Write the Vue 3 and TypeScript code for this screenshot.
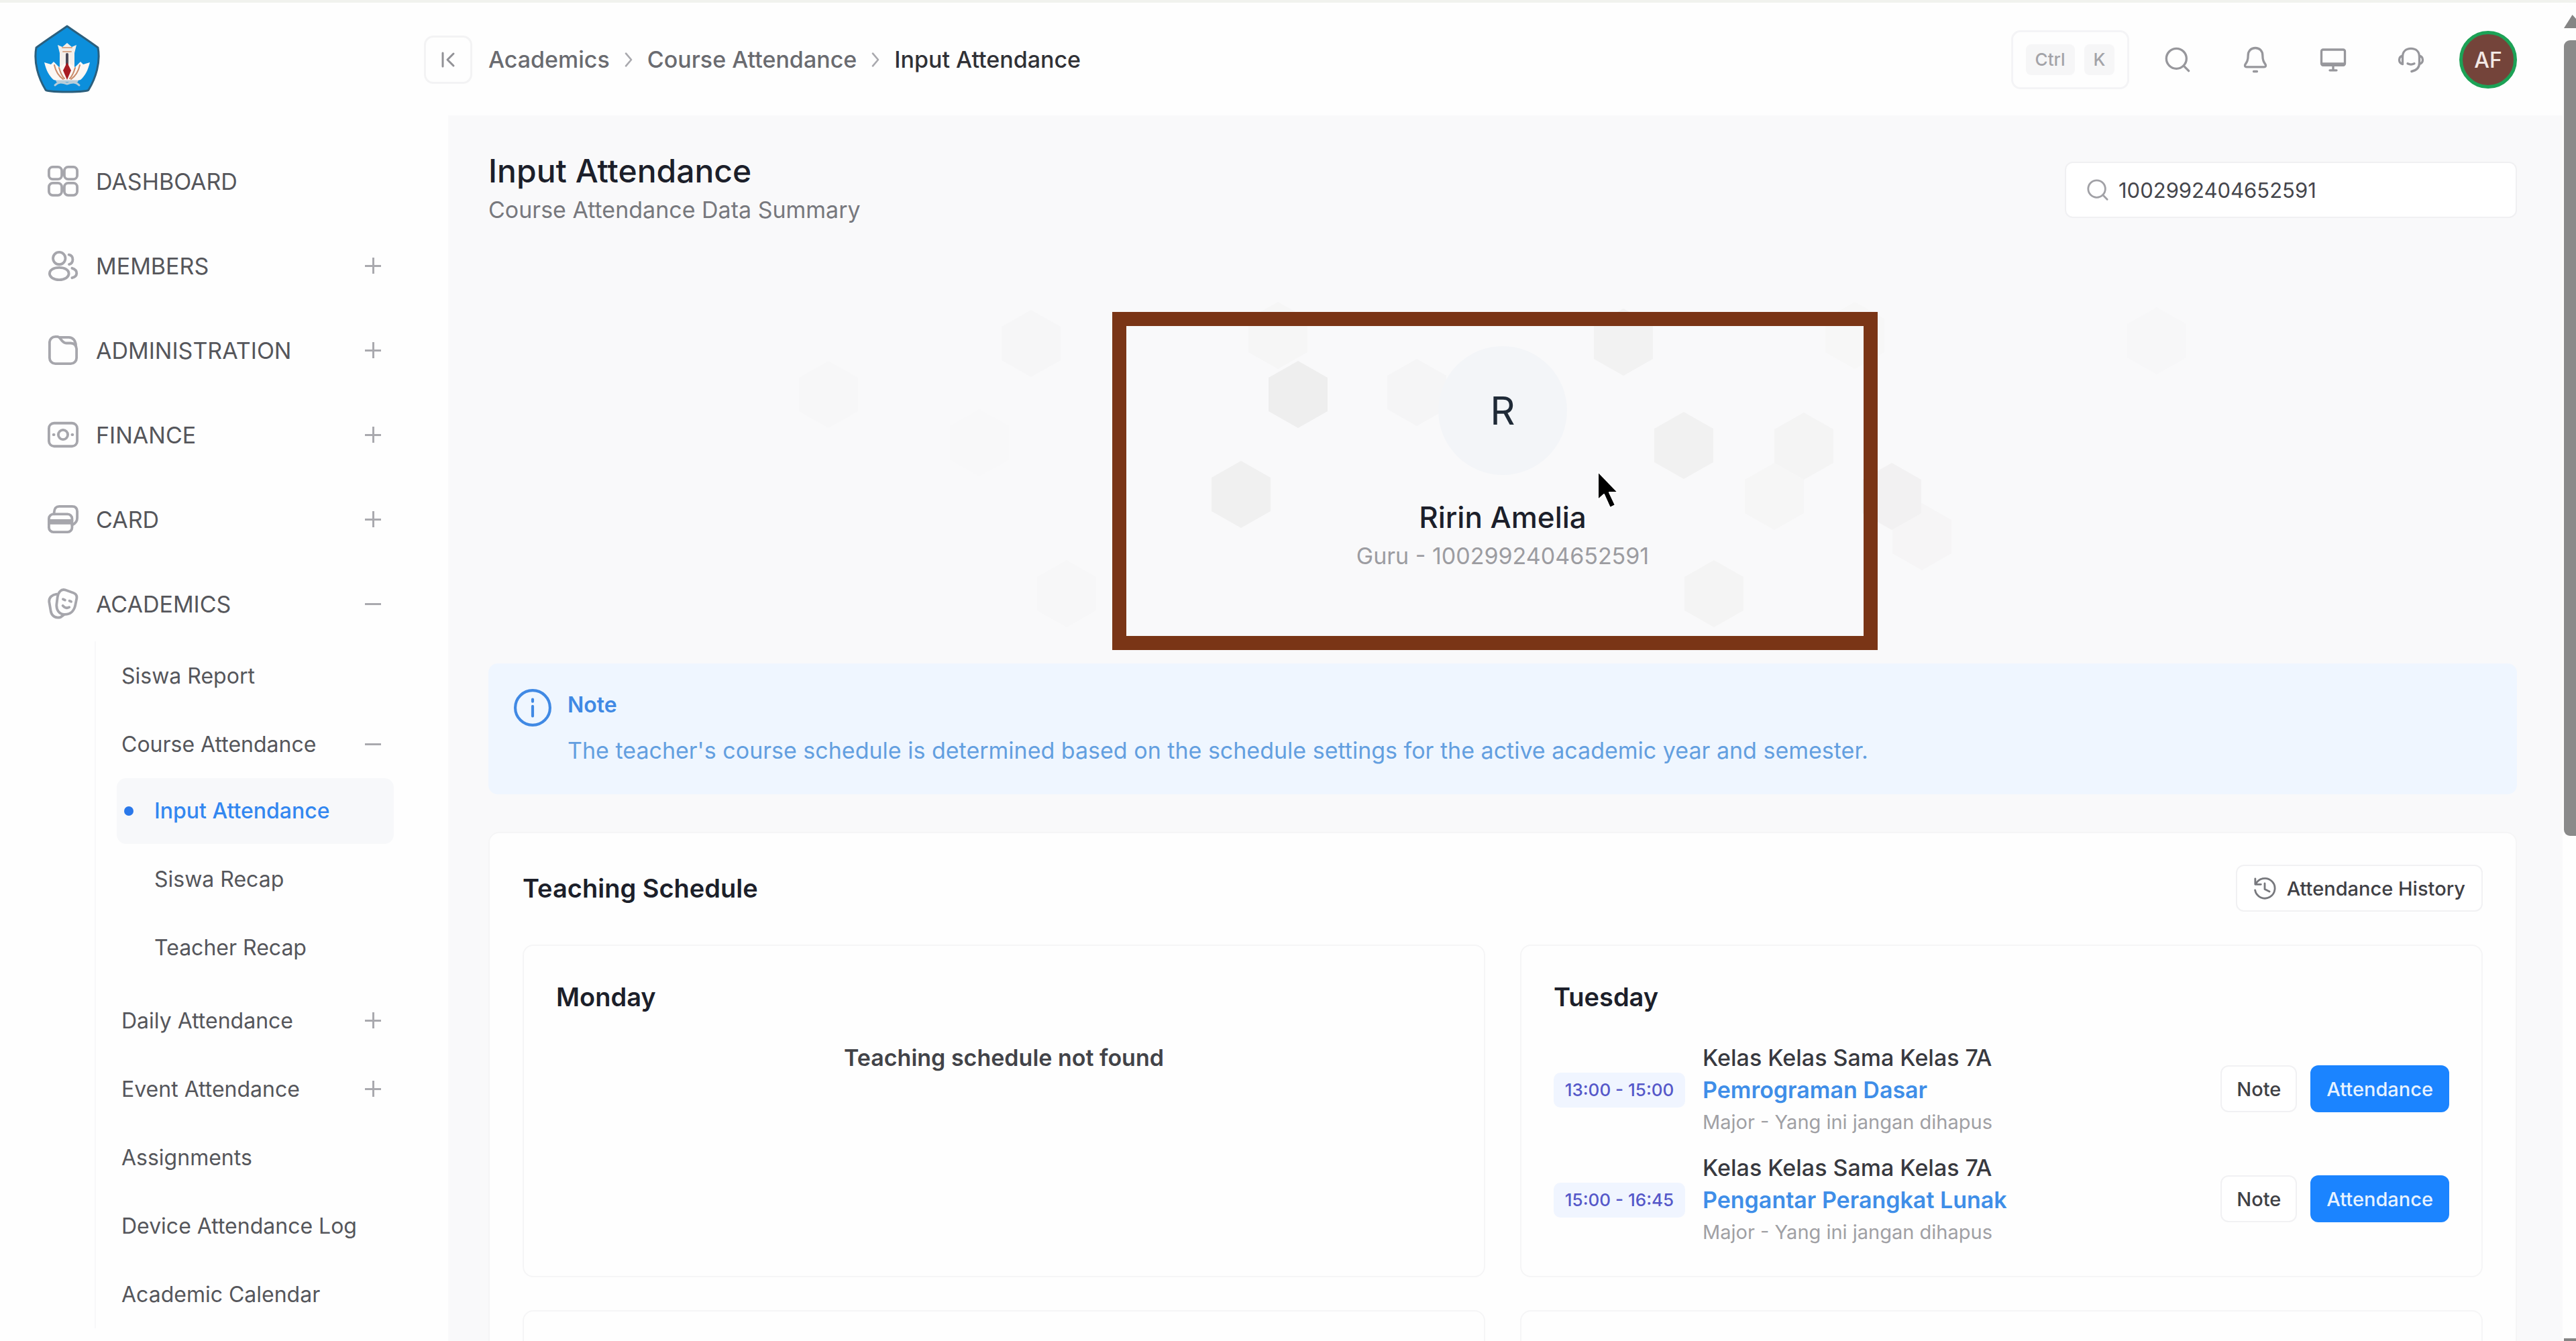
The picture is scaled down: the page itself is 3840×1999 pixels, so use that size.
<script setup lang="ts">
interface MenuItem {
  label: string
  icon: string
  mark?: 'plus' | 'minus'
}

interface SubItem {
  label: string
  mark?: 'plus' | 'minus'
  children?: { label: string; active?: boolean }[]
}

interface Lesson {
  time: string
  room: string
  course: string
  major: string
}

interface Day {
  name: string
  lessons: Lesson[]
}

const icons: Record<string, string[]> = {
  dashboard: [
    'M5 1h3a3 3 0 0 1 3 3v3.500a3 3 0 0 1-3 3H4a3 3 0 0 1-3-3V4a3 3 0 0 1 3-3z',
    'M16 1h4a3 3 0 0 1 3 3v3.500a3 3 0 0 1-3 3h-4a3 3 0 0 1-3-3V4a3 3 0 0 1 3-3z',
    'M4 13.500h4a3 3 0 0 1 3 3V20a3 3 0 0 1-3 3H4a3 3 0 0 1-3-3v-3.500a3 3 0 0 1 3-3z',
    'M16 13.500h4a3 3 0 0 1 3 3V20a3 3 0 0 1-3 3h-4a3 3 0 0 1-3-3v-3.500a3 3 0 0 1 3-3z',
  ],
  members: [
    'M9 1.500a4.800 4.800 0 1 1 0 9.600 4.800 4.800 0 0 1 0-9.600z',
    'M9 13.500c4.500 0 7.500 1.900 7.500 4.600S13.500 23 9 23s-7.500-2.200-7.500-4.900S4.500 13.500 9 13.500z',
    'M16.500 3.500c4 .8 4 6.400.2 7.500',
    'M19 14c5 1.600 4.500 6.400 0 7.500',
  ],
  administration: [
    'M1.500 6a4.500 4.500 0 0 1 4.500-4.500h1.500c3 0 3 5 7 5h3.500A4.500 4.500 0 0 1 22.500 11v7a4.500 4.500 0 0 1-4.500 4.500H6A4.500 4.500 0 0 1 1.500 18z',
    'M9 2h7.500c3 0 5.500 2.500 5.500 7',
  ],
  finance: [
    'M5 3h14a4 4 0 0 1 4 4v10a4 4 0 0 1-4 4H5a4 4 0 0 1-4-4V7a4 4 0 0 1 4-4z',
    'M12 8.300a3.700 3.700 0 1 1 0 7.400 3.700 3.700 0 0 1 0-7.400z',
    'M4.500 12h.5M19 12h.5',
  ],
  card: [
    'M4.500 8h11a3.500 3.500 0 0 1 3.500 3.500v7a3.500 3.500 0 0 1-3.500 3.500h-11A3.500 3.500 0 0 1 1 18.500v-7A3.500 3.500 0 0 1 4.500 8z',
    'M1 13h18M1 15h18M5 8c0-4 1-6 4-6h10c3 0 4 1.500 4 4v5c0 3-1.500 4.500-4 5.500',
  ],
  academics: [
    'M13.500 1.200l6.500 2.300c2.200.8 3 2.500 2.500 4.800l-1 5c-1 4.500-4 7.200-8.500 7-4-.2-6.500-3.500-6-8l.7-5.500c.4-3.500 2.800-6.500 5.800-5.600z',
    'M7 4.500C3.500 5 1 7 1.200 10.500L2.500 18c.8 3.800 4 5.500 7.500 4.500l3-2.200',
    'M12 8.500l1.500.6M17 9.800l1.300.5M11.800 13.500c1.500 1.800 3.200 2.200 5 1.200',
  ],
}

const menu: MenuItem[] = [
  { label: 'DASHBOARD', icon: 'dashboard' },
  { label: 'MEMBERS', icon: 'members', mark: 'plus' },
  { label: 'ADMINISTRATION', icon: 'administration', mark: 'plus' },
  { label: 'FINANCE', icon: 'finance', mark: 'plus' },
  { label: 'CARD', icon: 'card', mark: 'plus' },
  { label: 'ACADEMICS', icon: 'academics', mark: 'minus' },
]

const academics: SubItem[] = [
  { label: 'Siswa Report' },
  {
    label: 'Course Attendance',
    mark: 'minus',
    children: [{ label: 'Input Attendance', active: true }, { label: 'Siswa Recap' }, { label: 'Teacher Recap' }],
  },
  { label: 'Daily Attendance', mark: 'plus' },
  { label: 'Event Attendance', mark: 'plus' },
  { label: 'Assignments' },
  { label: 'Device Attendance Log' },
  { label: 'Academic Calendar' },
]

const days: Day[] = [
  { name: 'Monday', lessons: [] },
  {
    name: 'Tuesday',
    lessons: [
      { time: '13:00 - 15:00', room: 'Kelas Kelas Sama Kelas 7A', course: 'Pemrograman Dasar', major: 'Major - Yang ini jangan dihapus' },
      { time: '15:00 - 16:45', room: 'Kelas Kelas Sama Kelas 7A', course: 'Pengantar Perangkat Lunak', major: 'Major - Yang ini jangan dihapus' },
    ],
  },
]

// Background hexagons: centre x, centre y, fill
const hexagons: [number, number, string][] = [
  [507, 249, '#f7f7f8'],
  [809, 173, '#f6f6f7'],
  [732, 321, '#f8f8f9'],
  [862, 546, '#f7f7f8'],
  [1177, 161, '#f6f6f6'],
  [1207, 249, '#eeeeee'],
  [1122, 398, '#f0f0f0'],
  [1384, 246, '#f5f5f6'],
  [1692, 171, '#f2f2f2'],
  [1782, 325, '#f1f1f1'],
  [1961, 326, '#f4f4f4'],
  [1917, 401, '#f6f6f6'],
  [2037, 161, '#f7f7f7'],
  [2137, 461, '#f6f5f6'],
  [2092, 401, '#f2f1f2'],
  [1827, 546, '#f4f4f4'],
  [2487, 169, '#f7f7f8'],
]

const hexPoints = (x: number, y: number): string =>
  [[0, -50], [44, -25], [44, 25], [0, 50], [-44, 25], [-44, -25]].map(([dx, dy]) => `${x + dx},${y + dy}`).join(' ')
</script>

<template>
  <div class="shell">
    <header class="topbar">
      <a class="brand" href="#" aria-label="Home">
        <svg viewBox="0 0 100 104" aria-hidden="true">
          <path d="M50 2C64 12 80 22 96 34c4 22-3 45-14 63-2 4-62 4-64 0C7 79 0 56 4 34 20 22 36 12 50 2z" fill="#0c8fdc" stroke="#2b5f7d" stroke-width="3" stroke-linejoin="round" />
          <path d="M36 30l7 3 7-6 7 6 7-3-3 12v20H39V42z" fill="#f4efea" />
          <path d="M43 34h14M44 40h12" stroke="#d9a98a" stroke-width="2" />
          <path d="M16 56l10 3 4-4 8 8 12-8 12 8 8-8 4 4 10-3c-3 12-7 20-14 26-13 4-27 4-40 0-7-6-11-14-14-26z" fill="#fbf7f4" />
          <path d="M31 60c2 9 6 16 13 21M69 60c-2 9-6 16-13 21M38 64c2 7 4 12 8 16M62 64c-2 7-4 12-8 16" fill="none" stroke="#c98a68" stroke-width="2" />
          <path d="M50 44v24" stroke="#4a4a58" stroke-width="4" />
          <path d="M50 56l6 12-6 14-6-14z" fill="#a81c22" />
          <path d="M32 90c5-5 10-5 18-2 8-3 13-3 18 2M35 84h30" fill="none" stroke="#b9cdd9" stroke-width="3" />
        </svg>
      </a>
      <button class="collapse" type="button" aria-label="Collapse menu">
        <svg viewBox="0 0 24 24" aria-hidden="true"><path d="M4 2v20M20 3l-9 9 9 9" /></svg>
      </button>
      <nav class="crumbs" aria-label="Breadcrumb">
        <a href="#">Academics</a>
        <svg viewBox="0 0 12 24" aria-hidden="true"><path d="M3 5l6 7-6 7" /></svg>
        <a href="#">Course Attendance</a>
        <svg viewBox="0 0 12 24" aria-hidden="true"><path d="M3 5l6 7-6 7" /></svg>
        <span class="current">Input Attendance</span>
      </nav>
      <div class="tools">
        <button class="shortcut" type="button"><kbd>Ctrl</kbd><kbd>K</kbd></button>
        <button class="tool" type="button" aria-label="Search">
          <svg viewBox="0 0 24 24" aria-hidden="true"><circle cx="11" cy="11" r="9" /><path d="M17.500 17.500 22 22" /></svg>
        </button>
        <button class="tool" type="button" aria-label="Notifications">
          <svg viewBox="0 0 24 24" aria-hidden="true"><path d="M12 1.500c4 0 6.500 2.800 6.500 6.700 0 4.300 1 5.800 2.500 8 .8 1.200.2 2.300-1.200 2.300H4.200c-1.400 0-2-1.100-1.200-2.300 1.500-2.200 2.500-3.700 2.500-8 0-3.900 2.500-6.700 6.500-6.700zM10.500 22.500h3" /></svg>
        </button>
        <button class="tool" type="button" aria-label="Display">
          <svg viewBox="0 0 24 24" aria-hidden="true"><path d="M3 3h18a1.500 1.500 0 0 1 1.500 1.500v11A1.500 1.500 0 0 1 21 17H3a1.500 1.500 0 0 1-1.500-1.500v-11A1.500 1.500 0 0 1 3 3zM2 15.500h20M12 17v4M9 21.500h6" /></svg>
        </button>
        <button class="tool" type="button" aria-label="Support">
          <svg viewBox="0 0 24 24" aria-hidden="true"><path d="M4.500 16V9.500c0-4.800 3-7.500 7.500-7.500s7.500 2.700 7.500 7.500V15c0 4-2.500 6.500-7 7.500M4.500 8.500c-2 .5-3 1.800-3 3.700s1 3.300 3 3.800M19.500 8.500c2 .5 3 1.800 3 3.700s-1 3.300-3 3.800M9 15.500c2 1 4 1 6 0" /></svg>
        </button>
        <button class="avatar" type="button">AF</button>
      </div>
    </header>

    <div class="body">
      <nav class="sidebar" aria-label="Main menu">
        <ul class="menu">
          <li v-for="item in menu" :key="item.label">
            <a class="menu-link" href="#">
              <svg class="menu-icon" viewBox="0 0 24 24" aria-hidden="true">
                <path v-for="d in icons[item.icon]" :key="d" :d="d" />
              </svg>
              <span>{{ item.label }}</span>
              <i v-if="item.mark" :class="['mark', item.mark]"></i>
            </a>
          </li>
        </ul>
        <ul class="sub">
          <li v-for="item in academics" :key="item.label">
            <a class="sub-link" href="#">
              <span>{{ item.label }}</span>
              <i v-if="item.mark" :class="['mark', item.mark]"></i>
            </a>
            <ul v-if="item.children" class="nested">
              <li v-for="child in item.children" :key="child.label">
                <a :class="['nested-link', { active: child.active }]" href="#">{{ child.label }}</a>
              </li>
            </ul>
          </li>
        </ul>
      </nav>

      <main class="content">
        <div class="heading">
          <div>
            <h1>Input Attendance</h1>
            <p>Course Attendance Data Summary</p>
          </div>
          <label class="search">
            <svg viewBox="0 0 24 24" aria-hidden="true"><circle cx="11" cy="11" r="9" /><path d="M17.500 17.500 22 22" /></svg>
            <input type="text" value="1002992404652591" aria-label="Search teacher" />
          </label>
        </div>

        <section class="profile">
          <svg class="pattern" viewBox="0 0 3024 650" preserveAspectRatio="xMidYMid slice" aria-hidden="true">
            <polygon v-for="([x, y, fill], i) in hexagons" :key="i" :points="hexPoints(x, y)" :fill="fill" />
          </svg>
          <div class="initial">R</div>
          <h2>Ririn Amelia</h2>
          <p>Guru - 1002992404652591</p>
          <div class="frame"></div>
          <svg class="cursor" viewBox="0 0 34 58" aria-hidden="true">
            <path d="M2 2v42l9-8 9 20 8-4-9-19h13z" fill="#000" stroke="#fff" stroke-width="2" stroke-linejoin="round" />
          </svg>
        </section>

        <section class="note">
          <svg viewBox="0 0 54 54" aria-hidden="true"><circle cx="27" cy="27" r="25" /><path d="M27 25v14M27 15v3" /></svg>
          <div>
            <h3>Note</h3>
            <p>The teacher's course schedule is determined based on the schedule settings for the active academic year and semester.</p>
          </div>
        </section>

        <section class="schedule">
          <div class="schedule-head">
            <h2>Teaching Schedule</h2>
            <button class="outline history" type="button">
              <svg viewBox="0 0 24 24" aria-hidden="true"><path d="M2 2v6h6M2.500 8A10.500 10.500 0 1 1 1.800 14M12 7v6l5 2.500" /></svg>
              Attendance History
            </button>
          </div>
          <div class="days">
            <article v-for="day in days" :key="day.name" class="day">
              <h3>{{ day.name }}</h3>
              <p v-if="!day.lessons.length" class="empty">Teaching schedule not found</p>
              <div v-for="lesson in day.lessons" :key="lesson.time" class="lesson">
                <span class="time">{{ lesson.time }}</span>
                <div class="info">
                  <p class="room">{{ lesson.room }}</p>
                  <p class="course">{{ lesson.course }}</p>
                  <p class="major">{{ lesson.major }}</p>
                </div>
                <div class="actions">
                  <button class="outline" type="button">Note</button>
                  <button class="primary" type="button">Attendance</button>
                </div>
              </div>
            </article>
            <article class="day"></article>
            <article class="day"></article>
          </div>
        </section>
      </main>
    </div>

    <div class="scrollbar" aria-hidden="true">
      <i class="arrow up"></i>
      <i class="thumb"></i>
      <i class="arrow down"></i>
    </div>
  </div>
</template>

<style>
body {
  margin: 0;
}
</style>

<style scoped>
* {
  box-sizing: border-box;
}

h1,
h2,
h3,
p,
ul {
  margin: 0;
  padding: 0;
}

ul {
  list-style: none;
}

a {
  color: inherit;
  text-decoration: none;
}

button,
input,
kbd {
  font: inherit;
}

svg {
  flex: none;
  fill: none;
  stroke-linecap: round;
  stroke-linejoin: round;
}

.shell {
  display: grid;
  grid-template: 172px minmax(0, 1fr) / minmax(0, 1fr) 20px;
  height: 100vh;
  overflow: hidden;
  background: #fefefe;
  color: #1c1f2a;
  font-family: Inter, 'Liberation Sans', sans-serif;
  font-size: 32px;
}

.topbar {
  display: flex;
  align-items: center;
  padding: 2px 68px 0 50px;
  border-top: 4px solid #f1f2ee;
}

.brand {
  width: 582px;
}

.brand svg {
  display: block;
  width: 100px;
  height: 104px;
}

.collapse {
  display: grid;
  place-items: center;
  width: 72px;
  height: 72px;
  padding: 0;
  border: 3px solid #f3f3f4;
  border-radius: 14px;
  background: #fefefe;
}

.collapse svg {
  width: 24px;
  height: 24px;
  stroke: #919196;
  stroke-width: 3;
}

.crumbs {
  display: flex;
  align-items: center;
  gap: 20px;
  margin-left: 24px;
  color: #6a6b70;
  font-size: 34px;
  font-weight: 500;
  line-height: 40px;
}

.crumbs svg {
  width: 16px;
  height: 32px;
  stroke: #a9a9ae;
  stroke-width: 2;
}

.current {
  color: #303136;
}

.tools {
  display: flex;
  align-items: center;
  gap: 76px;
  margin-left: auto;
}

.shortcut {
  display: flex;
  align-items: center;
  justify-content: center;
  gap: 14px;
  width: 176px;
  height: 88px;
  margin-right: -24px;
  padding: 0;
  border: 3px solid #f4f4f6;
  border-radius: 14px;
  background: #fefefe;
}

kbd {
  padding: 0 14px;
  border-radius: 8px;
  background: #f6f6f7;
  color: #a3a3a8;
  font-size: 26px;
  font-weight: 500;
  line-height: 46px;
}

.tool {
  width: 40px;
  height: 40px;
  padding: 0;
  border: 0;
  background: none;
}

.tool svg {
  display: block;
  width: 40px;
  height: 40px;
  stroke: #97979c;
  stroke-width: 2;
}

.avatar {
  width: 86px;
  height: 86px;
  margin-left: -24px;
  padding: 0;
  border: 5px solid #1ca256;
  border-radius: 50%;
  background: #74443a;
  color: #f3e8e4;
  font-weight: 500;
}

.body {
  display: grid;
  grid-template-columns: 668px minmax(0, 1fr);
  grid-row: 2;
  min-height: 0;
}

.sidebar {
  padding: 44px 81px 0 0;
  overflow: hidden;
  color: #55565b;
}

.menu {
  display: grid;
  gap: 18px;
}

.menu-link {
  display: flex;
  align-items: center;
  gap: 26px;
  height: 108px;
  padding: 0 19px 0 71px;
  font-size: 34px;
}

.menu-icon {
  width: 46px;
  height: 46px;
  stroke: #a6a6ac;
  stroke-width: 2;
}

.mark {
  width: 24px;
  height: 24px;
  margin-left: auto;
  background: linear-gradient(#a9a9ae, #a9a9ae) center / 24px 3px no-repeat;
}

.mark.plus {
  background:
    linear-gradient(#a9a9ae, #a9a9ae) center / 24px 3px no-repeat,
    linear-gradient(#a9a9ae, #a9a9ae) center / 3px 24px no-repeat;
}

.sub {
  margin: 2px 0 0 141px;
  border-left: 2px solid #f8f8f9;
}

.sub-link {
  display: flex;
  align-items: center;
  height: 102px;
  padding: 0 19px 0 38px;
}

.nested {
  margin: 0 0 8px 31px;
}

.nested-link {
  position: relative;
  display: block;
  height: 98px;
  margin-bottom: 4px;
  padding-left: 56px;
  border-radius: 14px;
  line-height: 98px;
}

.nested-link.active {
  background: #f7f8fa;
  color: #3387f0;
  font-weight: 500;
}

.nested-link.active::before {
  position: absolute;
  top: 42px;
  left: 11px;
  width: 14px;
  height: 14px;
  border-radius: 50%;
  background: #2a78ea;
  content: '';
}

.content {
  padding: 55px 68px 0 60px;
  overflow: hidden;
  background: #f9f9fa;
}

.heading {
  display: flex;
  align-items: center;
  justify-content: space-between;
  height: 112px;
}

h1 {
  font-size: 48px;
  font-weight: 500;
  line-height: 60px;
}

.heading p {
  color: #77787d;
  font-size: 34px;
  line-height: 56px;
}

.search {
  display: flex;
  align-items: center;
  gap: 14px;
  width: 674px;
  height: 84px;
  padding: 0 30px;
  border: 2px solid #f0f0f2;
  border-radius: 12px;
  background: #fff;
}

.search svg {
  width: 34px;
  height: 34px;
  stroke: #a1a1a6;
  stroke-width: 2;
}

.search input {
  flex: 1;
  min-width: 0;
  padding: 0;
  border: 0;
  outline: 0;
  background: none;
  color: #45464c;
  font-size: 31px;
}

.profile {
  position: relative;
  display: flex;
  flex-direction: column;
  align-items: center;
  height: 650px;
  padding-top: 177px;
}

.pattern {
  position: absolute;
  inset: 0;
  width: 100%;
  height: 100%;
}

.initial {
  position: relative;
  width: 192px;
  height: 192px;
  border-radius: 50%;
  background: #f3f5f8;
  color: #1f2a37;
  font-size: 58px;
  line-height: 192px;
  text-align: center;
}

.profile h2 {
  position: relative;
  margin-top: 35px;
  font-size: 44px;
  font-weight: 500;
  line-height: 56px;
}

.profile p {
  position: relative;
  margin-top: 6px;
  color: #9c9ca1;
  font-size: 34px;
  line-height: 48px;
}

.frame {
  position: absolute;
  top: 126px;
  left: calc(50% - 582px);
  width: 1141px;
  height: 504px;
  border: 21px solid #7a3516;
}

.cursor {
  position: absolute;
  top: 362px;
  left: calc(50% + 140px);
  width: 34px;
  height: 58px;
}

.note {
  display: flex;
  gap: 24px;
  height: 195px;
  padding: 38px 38px 0;
  border-radius: 14px;
  background: #eff6ff;
}

.note svg {
  width: 56px;
  height: 56px;
  stroke: #4089e4;
  stroke-width: 4;
}

.note h3 {
  color: #4089e4;
  font-size: 32px;
  font-weight: 600;
  line-height: 48px;
}

.note p {
  margin-top: 20px;
  color: #639fe0;
  font-size: 34px;
  line-height: 48px;
}

.schedule {
  margin-top: 56px;
  padding: 47px 49px 49px;
  border: 2px solid #f5f5f6;
  border-radius: 16px;
  background: #fefefe;
}

.schedule-head {
  display: flex;
  align-items: center;
  justify-content: space-between;
  margin-bottom: 49px;
}

.schedule h2 {
  font-size: 38px;
  font-weight: 600;
  line-height: 52px;
}

.outline,
.primary {
  height: 70px;
  padding: 0 22px;
  border: 2px solid #f1f1f3;
  border-radius: 12px;
  background: #fff;
  color: #3f4045;
  font-size: 29px;
  font-weight: 500;
}

.primary {
  border-color: #1b84ff;
  background: #1b84ff;
  color: #e6f2ff;
}

.history {
  display: flex;
  align-items: center;
  gap: 16px;
  padding: 0 24px;
}

.history svg {
  width: 34px;
  height: 34px;
  stroke: #77787d;
  stroke-width: 2;
}

.days {
  display: grid;
  grid-template-columns: 1fr 1fr;
  gap: 49px 52px;
}

.day {
  min-height: 496px;
  padding: 52px 48px 41px;
  border: 2px solid #f5f5f6;
  border-radius: 16px;
}

.day h3 {
  margin-bottom: 43px;
  font-size: 38px;
  font-weight: 600;
  line-height: 48px;
}

.empty {
  color: #424348;
  font-size: 34px;
  font-weight: 600;
  line-height: 48px;
  text-align: center;
}

.lesson {
  display: flex;
  align-items: center;
}

.lesson + .lesson {
  margin-top: 20px;
}

.time {
  width: 196px;
  border-radius: 10px;
  background: #f0f5ff;
  color: #5558c9;
  font-size: 26px;
  font-weight: 500;
  line-height: 52px;
  text-align: center;
}

.info {
  flex: 1;
  margin-left: 26px;
  font-size: 34px;
  line-height: 48px;
}

.room {
  color: #38393f;
  font-weight: 500;
}

.course {
  color: #3f8ee8;
  font-weight: 600;
}

.major {
  color: #a0a0a4;
  font-size: 29px;
}

.actions {
  display: flex;
  gap: 20px;
  padding-bottom: 4px;
}

.scrollbar {
  display: flex;
  grid-row: 1 / 3;
  grid-column: 2;
  flex-direction: column;
  align-items: flex-end;
  padding-top: 18px;
  border-top: 4px solid #f1f2ee;
}

.thumb {
  width: 18px;
  height: 1186px;
  margin-top: 18px;
  border-radius: 9px 0 0 9px;
  background: #8a8a8a;
}

.arrow {
  width: 18px;
  height: 20px;
  background: #858585;
  clip-path: polygon(70% 0, 100% 30%, 100% 100%, 0 100%);
}

.arrow.down {
  height: 4px;
  margin-top: auto;
  clip-path: none;
}
</style>
